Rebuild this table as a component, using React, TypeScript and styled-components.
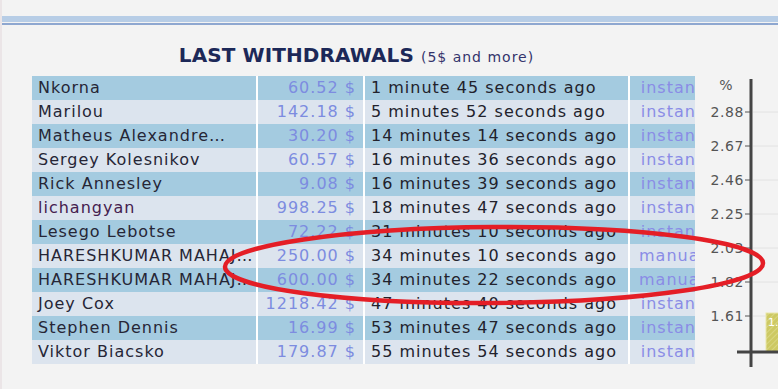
import React from "react";
import styled, { createGlobalStyle } from "styled-components";

const GlobalStyle = createGlobalStyle`
  html, body {
    margin: 0;
    padding: 0;
    background: #f3f3f3;
  }
`;

const Page = styled.div`
  position: relative;
  width: 778px;
  height: 389px;
  overflow: hidden;
  background: #f3f3f3;
  border-left: 2px solid #ebe5e7;
  box-sizing: border-box;
  font-family: "DejaVu Sans", Verdana, sans-serif;
`;

const Band = styled.div`
  margin-top: 16px;
  height: 6px;
  background: #b7cde6;
`;

const BandLine = styled.div`
  margin-top: 1px;
  height: 2px;
  background: #8ea7d0;
`;

const Content = styled.div`
  display: flex;
`;

const Main = styled.div`
  width: 663px;
  padding-left: 30px;
  flex-shrink: 0;
`;

const Title = styled.div`
  display: flex;
  justify-content: center;
  align-items: baseline;
  gap: 7px;
  height: 51px;
  padding-top: 18px;
  padding-right: 14px;
  box-sizing: border-box;
`;

const Heading = styled.span`
  font-size: 20px;
  font-weight: bold;
  letter-spacing: 0.1px;
  color: #1c2858;
`;

const Sub = styled.span`
  font-size: 14px;
  letter-spacing: 1px;
  color: #34346c;
`;

const TableWrap = styled.div`
  width: 663px;
  overflow: hidden;
`;

const Table = styled.table`
  border-collapse: collapse;
  table-layout: fixed;
  width: 680px;
  font-size: 16px;
  letter-spacing: 1px;
`;

const Row = styled.tr<{ $odd: boolean }>`
  height: 24px;
  background: ${(p) => (p.$odd ? "#a4cbe0" : "#dce4ee")};
`;

const Cell = styled.td<{ $w: number }>`
  width: ${(p) => p.$w}px;
  padding: 0;
  white-space: nowrap;
  overflow: hidden;
  border-right: 2px solid #ffffff;
  line-height: 24px;
`;

const NameCell = styled(Cell)<{ $visited?: boolean }>`
  padding-left: 6px;
  color: ${(p) => (p.$visited ? "#45204f" : "#262636")};
`;

const AmountCell = styled(Cell)`
  text-align: right;
  padding-right: 7px;
  color: #7d8ce0;
`;

const TimeCell = styled(Cell)`
  padding-left: 6px;
  color: #22222c;
`;

const MethodCell = styled(Cell)`
  text-align: center;
  border-right: none;
  color: #8a8ce6;
`;

const ChartBox = styled.div`
  padding-top: 45px;
  width: 83px;
  flex-shrink: 0;
`;

const Overlay = styled.svg`
  position: absolute;
  left: -2px;
  top: 0;
  pointer-events: none;
`;

type W = { name: string; amount: string; time: string; method: string; visited?: boolean };

const rows: W[] = [
  { name: "Nkorna", amount: "60.52", time: "1 minute 45 seconds ago", method: "instant" },
  { name: "Marilou", amount: "142.18", time: "5 minutes 52 seconds ago", method: "instant" },
  { name: "Matheus Alexandre…", amount: "30.20", time: "14 minutes 14 seconds ago", method: "instant" },
  { name: "Sergey Kolesnikov", amount: "60.57", time: "16 minutes 36 seconds ago", method: "instant" },
  { name: "Rick Annesley", amount: "9.08", time: "16 minutes 39 seconds ago", method: "instant" },
  { name: "lichangyan", amount: "998.25", time: "18 minutes 47 seconds ago", method: "instant", visited: true },
  { name: "Lesego Lebotse", amount: "72.22", time: "31 minutes 10 seconds ago", method: "instant" },
  { name: "HARESHKUMAR MAHAJ…", amount: "250.00", time: "34 minutes 10 seconds ago", method: "manual" },
  { name: "HARESHKUMAR MAHAJ…", amount: "600.00", time: "34 minutes 22 seconds ago", method: "manual" },
  { name: "Joey Cox", amount: "1218.42", time: "47 minutes 40 seconds ago", method: "instant" },
  { name: "Stephen Dennis", amount: "16.99", time: "53 minutes 47 seconds ago", method: "instant" },
  { name: "Viktor Biacsko", amount: "179.87", time: "55 minutes 54 seconds ago", method: "instant" },
];

const ticks = ["2.88", "2.67", "2.46", "2.25", "2.03", "1.82", "1.61"];

function Chart() {
  return (
    <svg width="83" height="319" viewBox="0 0 83 319">
      <defs>
        <pattern id="hatch" width="4" height="4" patternUnits="userSpaceOnUse" patternTransform="rotate(45)">
          <rect width="4" height="4" fill="#cdc963" />
          <line x1="0" y1="0" x2="0" y2="4" stroke="#dedb8c" strokeWidth="1.5" />
        </pattern>
      </defs>
      <text x="31" y="20" fontSize="14" fill="#555" textAnchor="middle" fontFamily="DejaVu Sans, sans-serif">
        %
      </text>
      {ticks.map((t, i) => {
        const y = 42 + 34 * i;
        return (
          <g key={t}>
            <line x1="58" y1={y} x2="83" y2={y} stroke="#e2e2e2" strokeWidth="1" />
            <line x1="50" y1={y} x2="55" y2={y} stroke="#555" strokeWidth="1" />
            <text
              x="49"
              y={y + 5}
              fontSize="14"
              fill="#555"
              textAnchor="end"
              letterSpacing="0.6"
              fontFamily="DejaVu Sans, sans-serif"
            >
              {t}
            </text>
          </g>
        );
      })}
      <rect x="71" y="243" width="14" height="39" fill="url(#hatch)" stroke="#e9e7ac" strokeWidth="1" />
      <text x="73" y="256" fontSize="11" fill="#ffffff" fontFamily="DejaVu Sans, sans-serif">
        1.
      </text>
      <line x1="56" y1="9" x2="56" y2="297" stroke="#444" strokeWidth="3" />
      <line x1="42" y1="282" x2="83" y2="282" stroke="#444" strokeWidth="3" />
    </svg>
  );
}

export default function App() {
  return (
    <Page>
      <GlobalStyle />
      <Band />
      <BandLine />
      <Content>
        <Main>
          <Title>
            <Heading>LAST WITHDRAWALS</Heading>
            <Sub>(5$ and more)</Sub>
          </Title>
          <TableWrap>
            <Table>
              <tbody>
                {rows.map((r, i) => (
                  <Row key={i} $odd={i % 2 === 0}>
                    <NameCell $w={218} $visited={r.visited}>
                      {r.name}
                    </NameCell>
                    <AmountCell $w={98}>{r.amount} $</AmountCell>
                    <TimeCell $w={257}>{r.time}</TimeCell>
                    <MethodCell $w={84}>{r.method}</MethodCell>
                  </Row>
                ))}
              </tbody>
            </Table>
          </TableWrap>
        </Main>
        <ChartBox>
          <Chart />
        </ChartBox>
      </Content>
      <Overlay width="778" height="389" viewBox="0 0 778 389">
        <ellipse
          cx="494"
          cy="265"
          rx="269"
          ry="38"
          fill="none"
          stroke="#e41e26"
          strokeWidth="4.5"
          transform="rotate(-0.4 494 265)"
        />
      </Overlay>
    </Page>
  );
}
